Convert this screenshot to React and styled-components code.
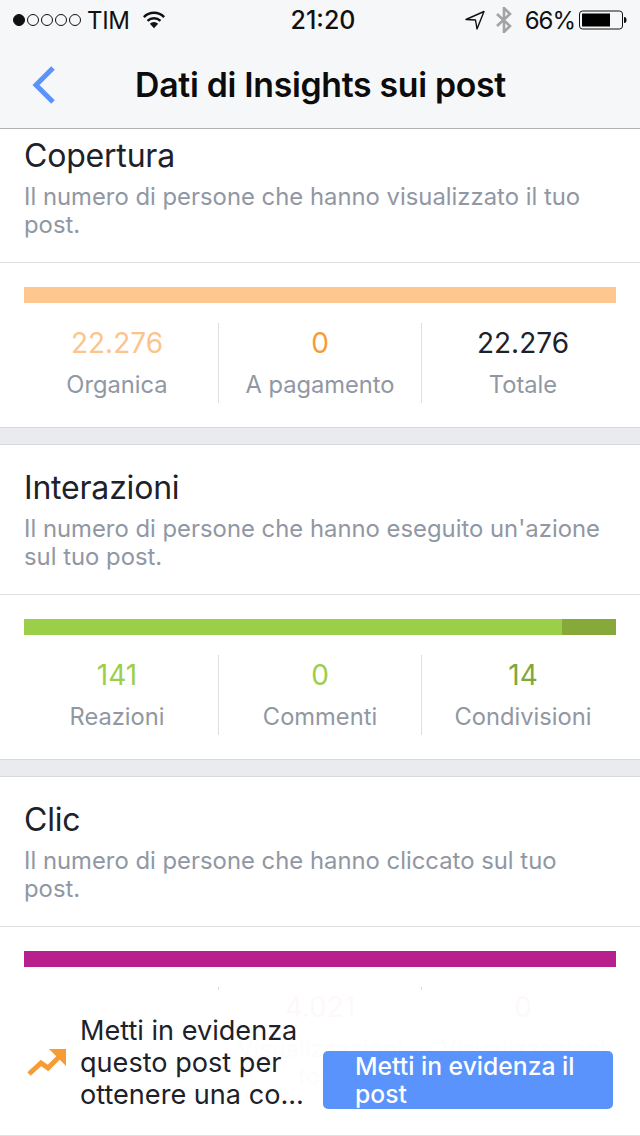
import React from "react";
import styled, { createGlobalStyle } from "styled-components";

const GlobalStyle = createGlobalStyle`
  html, body {
    margin: 0;
    padding: 0;
    background: #fff;
    font-family: Inter, "Noto Sans", "Liberation Sans", sans-serif;
  }
`;

const Page = styled.div`
  position: relative;
  width: 640px;
  height: 1136px;
  overflow: hidden;
  background: #e9ebee;
`;

const Header = styled.header`
  height: 128px;
  background: #f6f7f9;
  border-bottom: 1px solid #b2b2b2;
`;

const StatusBar = styled.div`
  height: 40px;
  display: flex;
  align-items: center;
  justify-content: space-between;
  padding: 0 13px;
  font-size: 24px;
  color: #111;
`;

const StatusSide = styled.div`
  flex: 1;
  display: flex;
  align-items: center;
  justify-content: ${(props) => (props.$right ? "flex-end" : "flex-start")};
`;

const Signal = styled.span`
  display: flex;
  gap: 2px;
  margin-right: 6px;
`;

const Dot = styled.span`
  width: 12px;
  height: 12px;
  box-sizing: border-box;
  border-radius: 50%;
  border: 1px solid #111;
  background: ${(props) => (props.$on ? "#111" : "transparent")};
`;

const Carrier = styled.span`
  margin-right: 12px;
  letter-spacing: -0.3px;
`;

const Clock = styled.span`
  margin-left: 6px;
  font-weight: 500;
  font-size: 25px;
`;

const BluetoothIcon = styled.svg`
  margin-left: 10px;
`;

const Percent = styled.span`
  margin: 0 4px 0 12px;
  letter-spacing: -1px;
`;

const NavBar = styled.div`
  height: 88px;
  display: flex;
  align-items: center;
  justify-content: center;
  position: relative;
`;

const BackIcon = styled.svg`
  position: absolute;
  left: 31px;
  top: 25px;
`;

const Title = styled.h1`
  margin: 0 0 0 1px;
  font-size: 33.8px;
  font-weight: 600;
  letter-spacing: -0.3px;
  color: #0c0c0c;
`;

const Card = styled.section`
  background: #fff;
  border-bottom: 1px solid #d8d9dc;
  margin-bottom: 16px;
  & + & {
    border-top: 1px solid #d8d9dc;
  }
`;

const CardHead = styled.div`
  box-sizing: border-box;
  height: ${(props) => (props.$scrolled ? "134px" : "150px")};
  padding: ${(props) => (props.$scrolled ? "9px" : "25px")} 30px 0 24px;
  border-bottom: 1px solid #dddfe2;
`;

const CardTitle = styled.h2`
  margin: 0 0 9px;
  font-size: 32px;
  line-height: 36px;
  font-weight: 400;
  letter-spacing: -0.2px;
  color: #1d2129;
`;

const CardText = styled.p`
  margin: 0;
  font-size: 23.85px;
  line-height: 28px;
  color: #9197a3;
`;

const CardBody = styled.div`
  padding: 24px 24px 24px;
`;

const Bar = styled.div`
  display: flex;
  height: 16px;
`;

const BarPart = styled.div`
  flex: ${(props) => props.$grow};
  background: ${(props) => props.$color};
`;

const Stats = styled.div`
  display: grid;
  grid-template-columns: 202px 203px 203px;
  margin: 20px -8px 0;
`;

const Stat = styled.div`
  box-sizing: border-box;
  height: 80px;
  padding: 0 8px;
  text-align: center;
  & + & {
    border-left: 1px solid #dddfe2;
  }
`;

const StatValue = styled.div`
  height: 40px;
  font-size: 28px;
  line-height: 40px;
  color: ${(props) => props.$color};
`;

const StatLabel = styled.div`
  margin-top: 8px;
  font-size: 23.7px;
  line-height: 28px;
  color: #9197a3;
`;

const PromoBar = styled.div`
  position: absolute;
  left: 0;
  right: 0;
  bottom: 0;
  height: 146px;
  box-sizing: border-box;
  padding: 0 27px;
  display: flex;
  align-items: flex-end;
  background: rgba(255, 255, 255, 0.97);
  border-bottom: 1px solid #dddfe2;
`;

const PromoIcon = styled.svg`
  flex-shrink: 0;
  margin: 0 13px 57px 0;
`;

const PromoText = styled.div`
  width: 242px;
  margin-bottom: 24px;
  font-size: 27.1px;
  line-height: 32px;
  color: #1d2129;
`;

const PromoButton = styled.button`
  box-sizing: border-box;
  width: 290px;
  height: 58px;
  margin: 0 0 26px auto;
  padding: 0 32px;
  border: none;
  border-radius: 5px;
  background: #5b93fc;
  color: #fff;
  font-family: inherit;
  font-size: 24.7px;
  font-weight: 500;
  line-height: 28px;
  text-align: left;
`;

const sections = [
  {
    title: "Copertura",
    text: "Il numero di persone che hanno visualizzato il tuo post.",
    scrolled: true,
    bar: [{ color: "#fec78f", grow: 1 }],
    stats: [
      { value: "22.276", label: "Organica", color: "#fcc48c" },
      { value: "0", label: "A pagamento", color: "#f79c34" },
      { value: "22.276", label: "Totale", color: "#1d2129" },
    ],
  },
  {
    title: "Interazioni",
    text: "Il numero di persone che hanno eseguito un'azione sul tuo post.",
    bar: [
      { color: "#9bcf49", grow: 538 },
      { color: "#86a939", grow: 54 },
    ],
    stats: [
      { value: "141", label: "Reazioni", color: "#9bcf49" },
      { value: "0", label: "Commenti", color: "#9bcf49" },
      { value: "14", label: "Condivisioni", color: "#7fa73a" },
    ],
  },
  {
    title: "Clic",
    text: "Il numero di persone che hanno cliccato sul tuo post.",
    bar: [{ color: "#b91f8c", grow: 1 }],
    stats: [
      { value: "", label: "", color: "#b91f8c" },
      { value: "4.021", label: "Visualizzazioni foto", color: "#b91f8c" },
      { value: "0", label: "Visualizzazioni dei video di 3 s.", color: "#b91f8c" },
    ],
  },
];

const App = () => {
  return (
    <Page>
      <GlobalStyle />
      <Header>
        <StatusBar>
          <StatusSide>
            <Signal>
              <Dot $on />
              <Dot />
              <Dot />
              <Dot />
              <Dot />
            </Signal>
            <Carrier>TIM</Carrier>
            <svg width="24" height="18" viewBox="0 0 26 19">
              <path d="M13 18.500l-4.500-5a6.500 6.500 0 0 1 9 0z" fill="#111" />
              <path d="M6 10.500a10 10 0 0 1 14 0" fill="none" stroke="#111" strokeWidth="2.600" />
              <path d="M2 6.300a15.500 15.500 0 0 1 22 0" fill="none" stroke="#111" strokeWidth="2.600" />
            </svg>
          </StatusSide>
          <Clock>21:20</Clock>
          <StatusSide $right>
            <svg width="20" height="20" viewBox="0 0 20 20">
              <path d="M1 9.500L19 1.500 12 19 10.500 10z" fill="none" stroke="#111" strokeWidth="1.400" strokeLinejoin="round" />
            </svg>
            <BluetoothIcon width="18" height="26" viewBox="0 0 18 26">
              <path d="M2 7l13 12-6 6V1l6 6L2 19" fill="none" stroke="#a3a3a3" strokeWidth="2.600" />
            </BluetoothIcon>
            <Percent>66%</Percent>
            <svg width="48" height="20" viewBox="0 0 48 20">
              <rect x="0.500" y="1" width="43" height="18" rx="3" fill="none" stroke="#111" />
              <rect x="3" y="3.500" width="28" height="13" fill="#000" />
              <path d="M45 7c2 0 2.500 1 2.500 3s-.5 3-2.500 3z" fill="#111" />
            </svg>
          </StatusSide>
        </StatusBar>
        <NavBar>
          <BackIcon width="26" height="40" viewBox="0 0 26 40">
            <path d="M22 3L5 20l17 17" fill="none" stroke="#5b93fc" strokeWidth="5" />
          </BackIcon>
          <Title>Dati di Insights sui post</Title>
        </NavBar>
      </Header>

      {sections.map((section) => (
        <Card key={section.title}>
          <CardHead $scrolled={section.scrolled}>
            <CardTitle>{section.title}</CardTitle>
            <CardText>{section.text}</CardText>
          </CardHead>
          <CardBody>
            <Bar>
              {section.bar.map((part) => (
                <BarPart key={part.color} $color={part.color} $grow={part.grow} />
              ))}
            </Bar>
            <Stats>
              {section.stats.map((stat, index) => (
                <Stat key={index}>
                  <StatValue $color={stat.color}>{stat.value}</StatValue>
                  <StatLabel>{stat.label}</StatLabel>
                </Stat>
              ))}
            </Stats>
          </CardBody>
        </Card>
      ))}

      <PromoBar>
        <PromoIcon width="40" height="30" viewBox="0 0 40 30">
          <path d="M2 26l12-11 7 5 13-13" fill="none" stroke="#f79c34" strokeWidth="5" />
          <path d="M22 1h17v17z" fill="#f79c34" />
        </PromoIcon>
        <PromoText>Metti in evidenza questo post per ottenere una co...</PromoText>
        <PromoButton>Metti in evidenza il post</PromoButton>
      </PromoBar>
    </Page>
  );
};

export default App;
